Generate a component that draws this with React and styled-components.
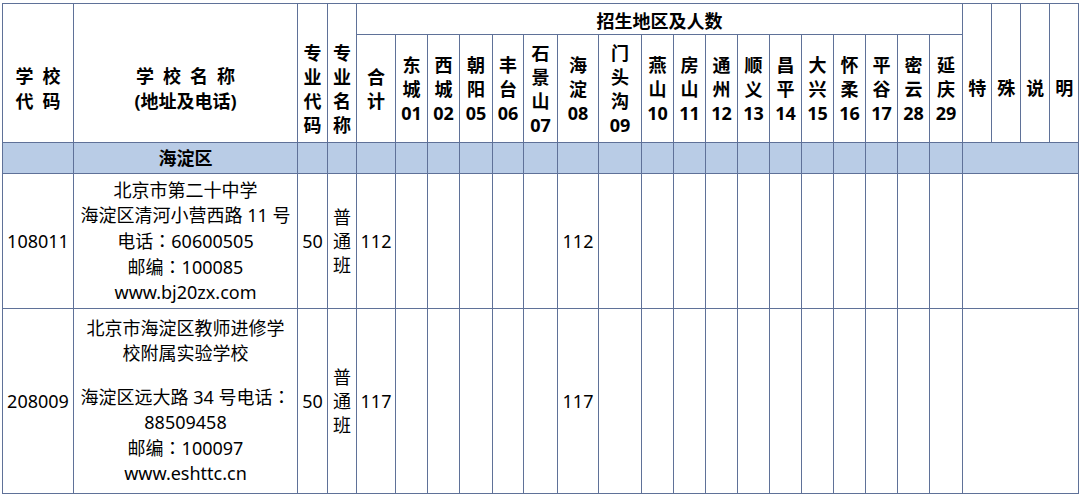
import React from "react";
import styled, { createGlobalStyle, css } from "styled-components";

const GlobalStyle = createGlobalStyle`
  html, body {
    margin: 0;
    padding: 0;
    background: #fff;
  }
  body {
    font-family: "Noto Sans", "Noto Sans CJK SC", sans-serif;
    color: #000;
  }
`;

const Page = styled.div`
  width: 1080px;
  padding: 3px 2px 0;
  box-sizing: border-box;
`;

const Table = styled.table`
  width: 1076px;
  table-layout: fixed;
  border-collapse: collapse;
  font-size: 18px;
`;

const Row = styled.tr`
  height: ${p => p.h}px;
`;

const cellBase = css`
  border: 1px solid #5f7198;
  padding: ${p => p.shift || 0}px 0 0;
  text-align: center;
  vertical-align: middle;
  line-height: ${p => p.lh || 25}px;
  white-space: nowrap;
  overflow: hidden;
  background: ${p => (p.band ? "#b9cce6" : "#fff")};
`;

const HeadCell = styled.th`
  ${cellBase};
  font-weight: 700;
`;

const Cell = styled.td`
  ${cellBase};
  font-weight: ${p => (p.bold ? 700 : 400)};
`;

const Line = styled.div`
  display: block;
`;

const Gap = styled.div`
  height: ${p => p.h}px;
`;

// fullwidth colon sits centred in the reference (YaHei style)
const Colon = styled.span`
  font-family: "Noto Sans CJK TC", sans-serif;
`;

const withColon = text =>
  text.split("：").flatMap((part, i) => (i === 0 ? [part] : [<Colon key={i}>：</Colon>, part]));

const Lines = ({ items }) => (
  <>
    {items.map((t, i) => (t === null ? <Gap key={i} h={18} /> : <Line key={i}>{withColon(t)}</Line>))}
  </>
);

const regions = [
  { name: ["东", "城", "01"], w: 32 },
  { name: ["西", "城", "02"], w: 32 },
  { name: ["朝", "阳", "05"], w: 33 },
  { name: ["丰", "台", "06"], w: 31 },
  { name: ["石", "景", "山", "07"], w: 34 },
  { name: ["海", "淀", "08"], w: 41 },
  { name: ["门", "头", "沟", "09"], w: 43 },
  { name: ["燕", "山", "10"], w: 32 },
  { name: ["房", "山", "11"], w: 32 },
  { name: ["通", "州", "12"], w: 32 },
  { name: ["顺", "义", "13"], w: 32 },
  { name: ["昌", "平", "14"], w: 32 },
  { name: ["大", "兴", "15"], w: 32 },
  { name: ["怀", "柔", "16"], w: 32 },
  { name: ["平", "谷", "17"], w: 32 },
  { name: ["密", "云", "28"], w: 32 },
  { name: ["延", "庆", "29"], w: 33 },
];

const schools = [
  {
    code: "108011",
    lines: ["北京市第二十中学", "海淀区清河小营西路 11 号", "电话：60600505", "邮编：100085", "www.bj20zx.com"],
    major: "50",
    majorName: ["普", "通", "班"],
    total: "112",
    counts: { 5: "112" },
    h: 135,
  },
  {
    code: "208009",
    lines: ["北京市海淀区教师进修学", "校附属实验学校", null, "海淀区远大路 34 号电话：", "88509458", "邮编：100097", "www.eshttc.cn"],
    major: "50",
    majorName: ["普", "通", "班"],
    total: "117",
    counts: { 5: "117" },
    h: 185,
  },
];

const notes = ["特", "殊", "说", "明"];
const sp = "\u2002";

export default function App() {
  return (
    <Page>
      <GlobalStyle />
      <Table>
        <colgroup>
          <col style={{ width: 71 }} />
          <col style={{ width: 224 }} />
          <col style={{ width: 30 }} />
          <col style={{ width: 29 }} />
          <col style={{ width: 39 }} />
          {regions.map((r, i) => (
            <col key={i} style={{ width: r.w }} />
          ))}
          {notes.map(n => (
            <col key={n} style={{ width: 29 }} />
          ))}
        </colgroup>
        <thead>
          <Row h={31}>
            <HeadCell rowSpan={2} shift={31}>
              <Lines items={[`学${sp}校`, `代${sp}码`]} />
            </HeadCell>
            <HeadCell rowSpan={2} shift={31}>
              <Lines items={[`学${sp}校${sp}名${sp}称`, "(地址及电话)"]} />
            </HeadCell>
            <HeadCell rowSpan={2} shift={31} lh={24}>
              <Lines items={["专", "业", "代", "码"]} />
            </HeadCell>
            <HeadCell rowSpan={2} shift={31} lh={24}>
              <Lines items={["专", "业", "名", "称"]} />
            </HeadCell>
            <HeadCell colSpan={18} shift={4}>招生地区及人数</HeadCell>
            {notes.map(n => (
              <HeadCell key={n} rowSpan={2} shift={31}>{n}</HeadCell>
            ))}
          </Row>
          <Row h={108}>
            <HeadCell lh={24}>
              <Lines items={["合", "计"]} />
            </HeadCell>
            {regions.map((r, i) => (
              <HeadCell key={i} lh={24}>
                <Lines items={r.name} />
              </HeadCell>
            ))}
          </Row>
        </thead>
        <tbody>
          <Row h={31}>
            <Cell band />
            <Cell band bold>海淀区</Cell>
            <Cell band />
            <Cell band />
            <Cell band />
            {regions.map((r, i) => (
              <Cell key={i} band />
            ))}
            <Cell band colSpan={4} />
          </Row>
          {schools.map(s => (
            <Row key={s.code} h={s.h}>
              <Cell>{s.code}</Cell>
              <Cell>
                <Lines items={s.lines} />
              </Cell>
              <Cell>{s.major}</Cell>
              <Cell lh={24}>
                <Lines items={s.majorName} />
              </Cell>
              <Cell>{s.total}</Cell>
              {regions.map((r, i) => (
                <Cell key={i}>{s.counts[i] || ""}</Cell>
              ))}
              <Cell colSpan={4} />
            </Row>
          ))}
        </tbody>
      </Table>
    </Page>
  );
}
